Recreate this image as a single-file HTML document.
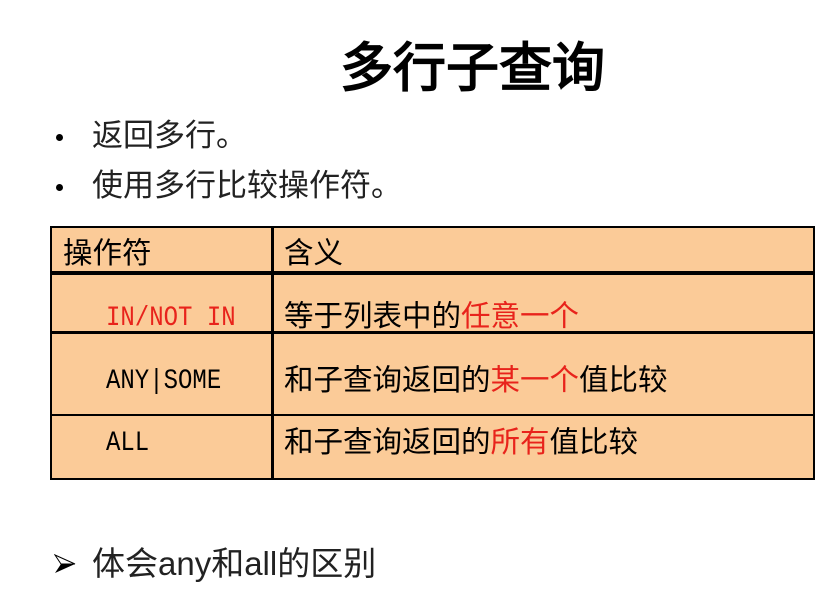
<!DOCTYPE html>
<html><head><meta charset="utf-8"><style>
body{margin:0;width:827px;height:589px;background:#fff;position:relative;overflow:hidden;font-family:"Liberation Sans","Noto Sans CJK SC",sans-serif;}
.a{position:absolute;white-space:nowrap;line-height:1;}
.t{left:340px;top:42px;font-size:53px;font-weight:bold;font-family:"Liberation Sans","WenQuanYi Zen Hei",sans-serif;}
.b{font-size:31px;left:92px;color:#222;}
.dot{position:absolute;width:7px;height:7px;border-radius:50%;background:#000;}
.tb{position:absolute;left:50px;top:226px;width:761px;height:250px;background:#FBCB98;border:2px solid #000;}
.h{position:absolute;left:0;width:100%;background:#000;}
.v{position:absolute;left:219px;top:0;width:3px;height:100%;background:#000;}
.c{font-size:29.5px;color:#000;}
.m{font-family:"Liberation Mono",monospace;font-size:24px;transform:scaleY(1.15);transform-origin:left center;}
.r{color:#e8231b;}
</style></head><body>
<div class="a t">多行子查询</div>
<div class="dot" style="left:56px;top:134px"></div>
<div class="a b" style="top:120px">返回多行。</div>
<div class="dot" style="left:56px;top:184px"></div>
<div class="a b" style="top:170px">使用多行比较操作符。</div>
<div class="tb">
 <div class="h" style="top:43px;height:4px"></div>
 <div class="h" style="top:103px;height:3px"></div>
 <div class="h" style="top:186px;height:2px"></div>
 <div class="v"></div>
 <div class="a c" style="left:11px;top:11px">操作符</div>
 <div class="a c" style="left:232px;top:11px">含义</div>
 <div class="a m r" style="left:54px;top:79px">IN/NOT IN</div>
 <div class="a c" style="left:232px;top:74px">等于列表中的<span class="r">任意一个</span></div>
 <div class="a m" style="left:54px;top:142px">ANY|SOME</div>
 <div class="a c" style="left:232px;top:138px">和子查询返回的<span class="r">某一个</span>值比较</div>
 <div class="a m" style="left:54px;top:204px">ALL</div>
 <div class="a c" style="left:232px;top:200px">和子查询返回的<span class="r">所有</span>值比较</div>
</div>
<svg style="position:absolute;left:54px;top:553px" width="22" height="22" viewBox="0 0 22 22"><path d="M1 2 L21 11 L1 20 L7 11 Z" fill="#000"/><path d="M1 2 L21 11 L7 11 Z" fill="#fff" stroke="#000" stroke-width="1"/></svg>
<div class="a" style="left:92px;top:547px;font-size:33px;color:#222">体会any和all的区别</div>
</body></html>
